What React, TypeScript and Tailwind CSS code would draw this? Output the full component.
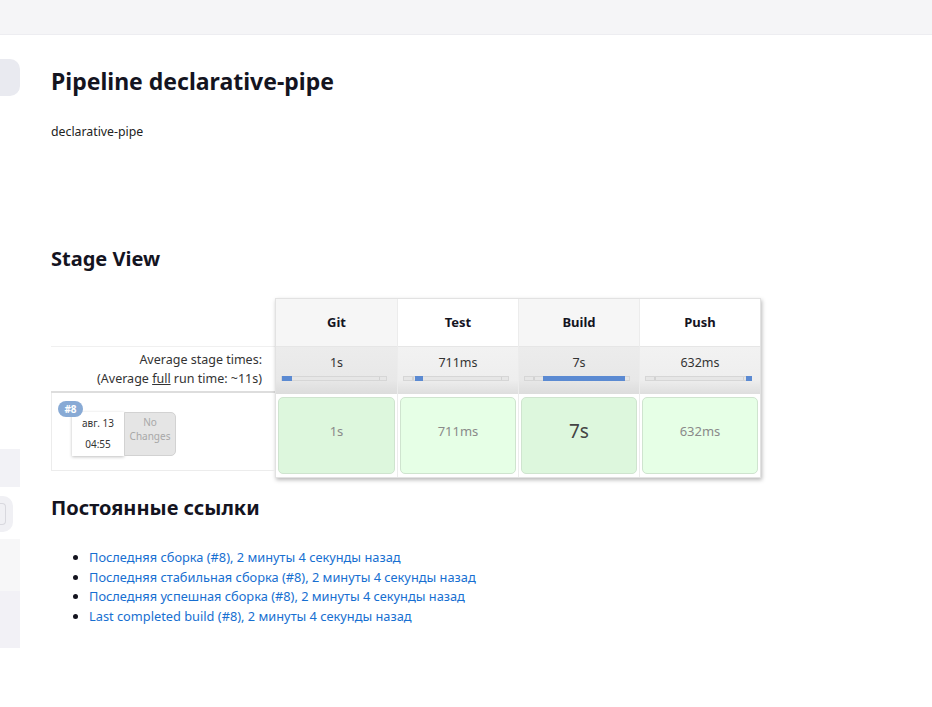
import React from 'react'

const stages = [
  { name: 'Git', avg: '1s', cell: '1s', from: 0, to: 10, dark: true, big: false },
  { name: 'Test', avg: '711ms', cell: '711ms', from: 11, to: 19, dark: false, big: false },
  { name: 'Build', avg: '7s', cell: '7s', from: 18, to: 100, dark: true, big: true },
  { name: 'Push', avg: '632ms', cell: '632ms', from: 100, to: 106, dark: false, big: false },
]

const links = [
  'Последняя сборка (#8), 2 минуты 4 секунды назад',
  'Последняя стабильная сборка (#8), 2 минуты 4 секунды назад',
  'Последняя успешная сборка (#8), 2 минуты 4 секунды назад',
  'Last completed build (#8), 2 минуты 4 секунды назад',
]

function ProgressBar({ from, to }: { from: number; to: number }) {
  return (
    <div className="relative mt-[4px] ml-[5px] h-[5px] w-[106px] bg-[#e6e6e6] border border-[#d6d6d6]">
      <div className="absolute top-0 bottom-0 left-[8px] w-[2px] bg-[#d2d2d2]" />
      <div className="absolute top-0 bottom-0 right-[6px] w-[1px] bg-[#d2d2d2]" />
      <div
        className="absolute top-[-1px] bottom-[-1px] bg-[#5b8ad2]"
        style={{ left: from, width: to - from }}
      />
    </div>
  )
}

function StageTable() {
  return (
    <div className="flex border border-[#e2e2e2] shadow-[1px_2px_4px_rgba(0,0,0,0.28)] bg-white">
      {stages.map((s, i) => (
        <div key={s.name} className={`flex flex-col w-[121px] ${i > 0 ? 'border-l border-[#ececec]' : ''}`}>
          <div
            className={`h-[47px] flex items-center justify-center text-[13px] font-bold text-[#14141f] ${
              s.dark ? 'bg-[#f6f6f6]' : 'bg-white'
            }`}
          >
            {s.name}
          </div>
          <div
            className={`h-[48px] pt-[7px] border-t border-[#e6e6e6] ${
              s.dark
                ? 'bg-[linear-gradient(#ececec,#e8e8e8_70%,#dcdcdc)]'
                : 'bg-[linear-gradient(#f2f2f2,#eeeeee_70%,#dedede)]'
            }`}
          >
            <div className="text-center text-[12.5px] leading-[18px] text-[#333]">{s.avg}</div>
            <ProgressBar from={s.from} to={s.to} />
          </div>
          <div className="h-[83px] px-[2px] pt-[3px] pb-[3px] bg-white">
            <div
              className={`h-full rounded-[5px] border border-[#cfe4cf] flex items-center justify-center pb-[8px] ${
                s.dark ? 'bg-[#ddf7dd]' : 'bg-[#e6ffe6]'
              } ${s.big ? 'text-[19px] text-[#444]' : 'text-[13px] text-[#8a8a8a]'}`}
            >
              {s.cell}
            </div>
          </div>
        </div>
      ))}
    </div>
  )
}

export default function App() {
  return (
    <div className="min-h-screen bg-white text-[#14141f] font-['Noto_Sans','Open_Sans',sans-serif]">
      <div className="h-[35px] bg-[#f5f5f7] border-b border-[#ededf1]" />
      <div className="flex">
        <aside className="w-[20px] shrink-0 flex flex-col">
          <div className="mt-[24px] h-[37px] w-[20px] rounded-r-[10px] bg-[#e9eaf0]" />
          <div className="mt-[353px] h-[38px] bg-[#f2f2f6]" />
          <div className="mt-[9px] h-[36px] w-[13px] rounded-r-[10px] bg-[#f0f0f4] flex items-center">
            <div className="h-[22px] w-[6px] rounded-r-[4px] border border-l-0 border-[#d8d8de]" />
          </div>
          <div className="mt-[7px] h-[52px] bg-[#f7f7f8]" />
          <div className="h-[57px] bg-[#f2f1f6]" />
        </aside>

        <main className="pl-[31px]">
          <h1 className="mt-[30px] text-[23px] leading-[32px] font-bold text-[#14141f]">
            Pipeline declarative-pipe
          </h1>
          <p className="mt-[25px] text-[12.3px] leading-[20px] text-[#222]">declarative-pipe</p>

          <h2 className="mt-[103px] text-[20px] leading-[28px] font-bold">Stage View</h2>

          <div className="mt-[25px] flex">
            <div className="w-[224px] flex flex-col">
              <div className="h-[48px]" />
              <div className="h-[47px] border-t border-[#f0f0f0] border-b-2 border-b-[#dddddd] flex flex-col items-end justify-center pr-[13px] text-[12.5px] leading-[19px] text-[#333]">
                <span>Average stage times:</span>
                <span>
                  (Average <span className="underline">full</span> run time: ~11s)
                </span>
              </div>
              <div className="relative h-[78px] border-l border-b border-[#ececec]">
                <span className="absolute top-[8px] left-[6px] z-10 h-[16px] w-[25px] rounded-full bg-[#88aad5] text-white text-[10px] font-bold leading-[16px] text-center">
                  #8
                </span>
                <div className="mt-[19px] ml-[20px] flex">
                  <div className="w-[52px] h-[44px] bg-white shadow-[0_1px_3px_rgba(0,0,0,0.25)] flex flex-col items-center justify-center text-[10px] leading-[21px] text-[#333]">
                    <span>авг. 13</span>
                    <span>04:55</span>
                  </div>
                  <div className="w-[52px] h-[44px] bg-[#e5e5e5] border border-[#d2d2d2] rounded-r-[5px] flex flex-col items-center justify-start pt-[2px] text-[10px] leading-[14px] text-[#a8a8a8]">
                    <span>No</span>
                    <span>Changes</span>
                  </div>
                </div>
              </div>
            </div>
            <StageTable />
          </div>

          <h2 className="mt-[16px] text-[20px] leading-[28px] font-bold">Постоянные ссылки</h2>
          <ul className="mt-[26px] pl-[38px] list-disc text-[12.8px] leading-[19.6px] marker:text-[#14141f]">
            {links.map((l) => (
              <li key={l}>
                <a href="#" className="text-[#176fd1]">
                  {l}
                </a>
              </li>
            ))}
          </ul>
        </main>
      </div>
    </div>
  )
}
